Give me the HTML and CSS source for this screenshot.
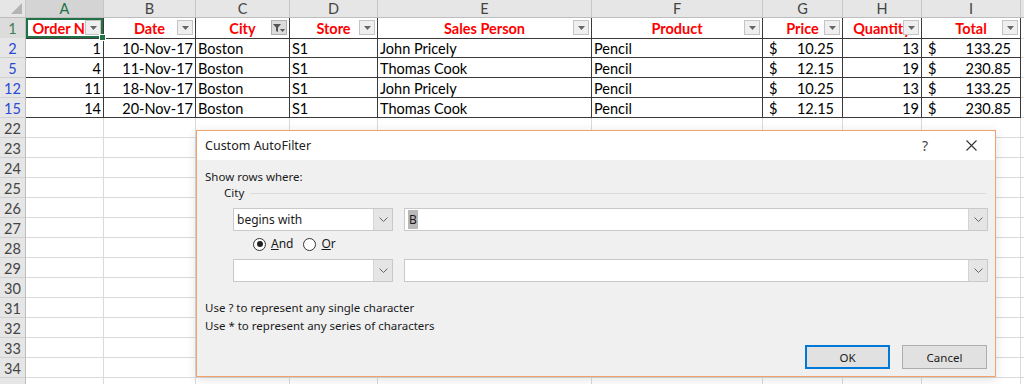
FILE: index.html
```html
<!DOCTYPE html>
<html>
<head>
    <title>Custom AutoFilter</title>
    <link rel="stylesheet" href="styles.css">
</head>
<body>
    <div class="sheet">
        <div class="row colhead">
            <div class="corner"><span class="tri"></span></div>
            <div class="sel">A</div><div>B</div><div>C</div><div>D</div><div>E</div><div>F</div><div>G</div><div>H</div><div>I</div><div></div>
        </div>

        <div class="row thead">
            <div class="rh rsel">1</div>
            <div class="th active">Order No.<span class="fbtn"><svg width="7" height="4"><path d="M0 0h7L3.5 4z" fill="#666"/></svg></span><span class="handle"></span></div>
            <div class="th">Date<span class="fbtn"><svg width="7" height="4"><path d="M0 0h7L3.5 4z" fill="#666"/></svg></span></div>
            <div class="th">City<span class="fbtn on"><svg width="14" height="10"><path d="M1 1h8L6 4.5V9L4 8V4.5z" fill="#555"/><path d="M8 6h5l-2.5 3z" fill="#555"/></svg></span></div>
            <div class="th">Store<span class="fbtn"><svg width="7" height="4"><path d="M0 0h7L3.5 4z" fill="#666"/></svg></span></div>
            <div class="th">Sales Person<span class="fbtn"><svg width="7" height="4"><path d="M0 0h7L3.5 4z" fill="#666"/></svg></span></div>
            <div class="th">Product<span class="fbtn"><svg width="7" height="4"><path d="M0 0h7L3.5 4z" fill="#666"/></svg></span></div>
            <div class="th">Price<span class="fbtn"><svg width="7" height="4"><path d="M0 0h7L3.5 4z" fill="#666"/></svg></span></div>
            <div class="th">Quantity<span class="fbtn"><svg width="7" height="4"><path d="M0 0h7L3.5 4z" fill="#666"/></svg></span></div>
            <div class="th">Total<span class="fbtn"><svg width="7" height="4"><path d="M0 0h7L3.5 4z" fill="#666"/></svg></span></div>
            <div class="pad"></div>
        </div>

        <div class="row data">
            <div class="rh blue">2</div>
            <div class="num">1</div><div class="num">10-Nov-17</div><div>Boston</div><div>S1</div><div>John Pricely</div><div>Pencil</div>
            <div class="acct"><span>$</span><span>10.25</span></div><div class="num">13</div><div class="acct tot"><span>$</span><span>133.25</span></div><div class="pad"></div>
        </div>
        <div class="row data">
            <div class="rh blue">5</div>
            <div class="num">4</div><div class="num">11-Nov-17</div><div>Boston</div><div>S1</div><div>Thomas Cook</div><div>Pencil</div>
            <div class="acct"><span>$</span><span>12.15</span></div><div class="num">19</div><div class="acct tot"><span>$</span><span>230.85</span></div><div class="pad"></div>
        </div>
        <div class="row data">
            <div class="rh blue">12</div>
            <div class="num">11</div><div class="num">18-Nov-17</div><div>Boston</div><div>S1</div><div>John Pricely</div><div>Pencil</div>
            <div class="acct"><span>$</span><span>10.25</span></div><div class="num">13</div><div class="acct tot"><span>$</span><span>133.25</span></div><div class="pad"></div>
        </div>
        <div class="row data">
            <div class="rh blue">15</div>
            <div class="num">14</div><div class="num">20-Nov-17</div><div>Boston</div><div>S1</div><div>Thomas Cook</div><div>Pencil</div>
            <div class="acct"><span>$</span><span>12.15</span></div><div class="num">19</div><div class="acct tot"><span>$</span><span>230.85</span></div><div class="pad"></div>
        </div>

        <div class="row"><div class="rh">22</div><div></div><div></div><div></div><div></div><div></div><div></div><div></div><div></div><div></div><div></div></div>
        <div class="row"><div class="rh">23</div><div></div><div></div><div></div><div></div><div></div><div></div><div></div><div></div><div></div><div></div></div>
        <div class="row"><div class="rh">24</div><div></div><div></div><div></div><div></div><div></div><div></div><div></div><div></div><div></div><div></div></div>
        <div class="row"><div class="rh">25</div><div></div><div></div><div></div><div></div><div></div><div></div><div></div><div></div><div></div><div></div></div>
        <div class="row"><div class="rh">26</div><div></div><div></div><div></div><div></div><div></div><div></div><div></div><div></div><div></div><div></div></div>
        <div class="row"><div class="rh">27</div><div></div><div></div><div></div><div></div><div></div><div></div><div></div><div></div><div></div><div></div></div>
        <div class="row"><div class="rh">28</div><div></div><div></div><div></div><div></div><div></div><div></div><div></div><div></div><div></div><div></div></div>
        <div class="row"><div class="rh">29</div><div></div><div></div><div></div><div></div><div></div><div></div><div></div><div></div><div></div><div></div></div>
        <div class="row"><div class="rh">30</div><div></div><div></div><div></div><div></div><div></div><div></div><div></div><div></div><div></div><div></div></div>
        <div class="row"><div class="rh">31</div><div></div><div></div><div></div><div></div><div></div><div></div><div></div><div></div><div></div><div></div></div>
        <div class="row"><div class="rh">32</div><div></div><div></div><div></div><div></div><div></div><div></div><div></div><div></div><div></div><div></div></div>
        <div class="row"><div class="rh">33</div><div></div><div></div><div></div><div></div><div></div><div></div><div></div><div></div><div></div><div></div></div>
        <div class="row"><div class="rh">34</div><div></div><div></div><div></div><div></div><div></div><div></div><div></div><div></div><div></div><div></div></div>
        <div class="row"><div class="rh"></div><div></div><div></div><div></div><div></div><div></div><div></div><div></div><div></div><div></div><div></div></div>
    </div>

    <div class="dialog">
        <div class="titlebar">
            <span class="title">Custom AutoFilter</span>
            <span class="help">?</span>
            <span class="close"><svg width="11" height="11"><path d="M0.5 0.5l10 10M10.5 0.5l-10 10" stroke="#333" stroke-width="1.1"/></svg></span>
        </div>
        <div class="body">
            <div class="caption">Show rows where:</div>
            <div class="legend"><span>City</span><i></i></div>

            <div class="crit">
                <div class="combo">
                    <span class="val">begins with</span>
                    <span class="drop"><svg width="9" height="5"><path d="M0.5 0.5l4 4 4-4" fill="none" stroke="#666"/></svg></span>
                </div>
                <div class="combo wide">
                    <span class="val"><b class="hl">B</b></span>
                    <span class="drop"><svg width="9" height="5"><path d="M0.5 0.5l4 4 4-4" fill="none" stroke="#666"/></svg></span>
                </div>
            </div>

            <div class="radios">
                <label><span class="radio checked"></span><span><u>A</u>nd</span></label>
                <label><span class="radio"></span><span><u>O</u>r</span></label>
            </div>

            <div class="crit">
                <div class="combo">
                    <span class="val"></span>
                    <span class="drop"><svg width="9" height="5"><path d="M0.5 0.5l4 4 4-4" fill="none" stroke="#666"/></svg></span>
                </div>
                <div class="combo wide">
                    <span class="val"></span>
                    <span class="drop"><svg width="9" height="5"><path d="M0.5 0.5l4 4 4-4" fill="none" stroke="#666"/></svg></span>
                </div>
            </div>

            <div class="hint first">Use ? to represent any single character</div>
            <div class="hint">Use * to represent any series of characters</div>

            <div class="buttons">
                <button class="btn default">OK</button>
                <button class="btn">Cancel</button>
            </div>
        </div>
    </div>
</body>
</html>
```

FILE: styles.css
```css
body {
    margin: 0;
    background: #fff;
    font-family: Lato, "Liberation Sans", sans-serif;
    overflow: hidden;
}
.sheet {
    width: 1024px;
    height: 384px;
    overflow: hidden;
}
.row {
    display: grid;
    grid-template-columns: 26px 78px 92px 94px 88px 214px 171px 80px 79px 99px 1fr;
    height: 20px;
}
.row > div {
    box-sizing: border-box;
    border-right: 1px solid #dadada;
    border-bottom: 1px solid #dadada;
    font-size: 14.5px;
    line-height: 18px;
    padding: 2px 2px 0;
    white-space: nowrap;
    overflow: hidden;
    color: #000;
}

/* column letters */
.colhead {
    height: 18px;
}
.colhead > div {
    background: #e6e6e6;
    border-right-color: #c6c6c6;
    border-bottom-color: #bdbdbd;
    text-align: center;
    line-height: 17px;
    padding-top: 0;
    color: #444;
}
.colhead > div.sel {
    background: #d4d4d4;
    color: #217346;
}
.colhead > .corner {
    position: relative;
}
.corner .tri {
    position: absolute;
    right: 3px;
    bottom: 3px;
    border-style: solid;
    border-width: 0 0 11px 11px;
    border-color: transparent transparent #b4b4b4 transparent;
}

/* row numbers */
.row > .rh {
    background: #e6e6e6;
    border-right-color: #bdbdbd;
    border-bottom-color: #d0d0d0;
    color: #444;
    text-align: center;
    padding: 2px 0 0;
}
.row > .rh.rsel {
    background: #dcdcdc;
    color: #3f7a55;
}
.row > .rh.blue {
    color: #2a49d6;
}

/* table header cells */
.thead > div,
.data > div {
    border-right-color: #3a3a3a;
    border-bottom-color: #3a3a3a;
}
.thead > .rh,
.data > .rh {
    border-right-color: #bdbdbd;
    border-bottom-color: #d0d0d0;
}
.thead > .pad,
.data > .pad {
    border-right-color: #dadada;
    border-bottom-color: #dadada;
}
.th {
    position: relative;
    text-align: center;
    font-weight: bold;
    color: #ff0000 !important;
}
.th.active {
    overflow: visible !important;
    box-shadow: inset 0 0 0 2px #217346;
}
.fbtn {
    position: absolute;
    right: 2px;
    top: 2px;
    width: 16px;
    height: 15px;
    box-sizing: border-box;
    background: #efefef;
    border: 1px solid #c4c4c4;
    display: flex;
    align-items: center;
    justify-content: center;
}
.fbtn.on {
    background: #dcdcdc;
    border-color: #b0b0b0;
}
.handle {
    position: absolute;
    right: -3px;
    bottom: -3px;
    width: 5px;
    height: 5px;
    background: #217346;
    border: 1px solid #fff;
    z-index: 2;
}

/* data cells */
.num {
    text-align: right;
}
.acct {
    display: flex;
    justify-content: space-between;
    padding: 2px 8px 0 6px !important;
}
.acct.tot {
    padding-right: 9px !important;
}

/* dialog */
.dialog {
    position: absolute;
    left: 196px;
    top: 130px;
    width: 800px;
    height: 247px;
    box-sizing: border-box;
    border: 1px solid #f1a36d;
    background: #f0f0f0;
    box-shadow: 0 2px 10px rgba(0, 0, 0, 0.12);
    font-family: "Noto Sans", "Open Sans", sans-serif;
    font-size: 11.5px;
    color: #1a1a1a;
}
.titlebar {
    height: 29px;
    background: #fff;
    display: flex;
    align-items: center;
    padding-left: 8px;
}
.title {
    flex: 1;
    font-size: 12.5px;
    color: #222;
}
.help {
    font-size: 14px;
    color: #444;
    margin-right: 38px;
}
.close {
    display: flex;
    margin-right: 18px;
}
.body {
    padding: 0 7px 0 8px;
}
.caption {
    margin-top: 9px;
    line-height: 16px;
}
.legend {
    display: flex;
    align-items: center;
    line-height: 16px;
    margin-left: 19px;
}
.legend i {
    flex: 1;
    height: 1px;
    background: #dcdcdc;
    margin: 0 2px 0 6px;
}
.crit {
    display: flex;
    gap: 11px;
    margin: 7px 0 0 28px;
}
.combo {
    width: 160px;
    height: 23px;
    box-sizing: border-box;
    background: #fff;
    border: 1px solid #c9c9c9;
    display: flex;
}
.combo.wide {
    flex: 1;
}
.combo .val {
    flex: 1;
    padding-left: 3px;
    line-height: 21px;
    font-size: 12px;
}
.combo .drop {
    width: 18px;
    background: #e5e5e5;
    border-left: 1px solid #d4d4d4;
    display: flex;
    align-items: center;
    justify-content: center;
}
.hl {
    font-weight: normal;
    background: #b9b9b9;
    padding: 1px 1px;
}
.radios {
    display: flex;
    gap: 10px;
    margin: 5px 0 0 48px;
    line-height: 16px;
    font-size: 12px;
}
.radios label {
    display: flex;
    align-items: center;
    gap: 5px;
}
.radio {
    width: 11px;
    height: 11px;
    border: 1px solid #333;
    border-radius: 50%;
    background: #fff;
    display: flex;
    align-items: center;
    justify-content: center;
}
.radio.checked::after {
    content: "";
    width: 6px;
    height: 6px;
    border-radius: 50%;
    background: #222;
}
.hint {
    line-height: 18px;
}
.hint.first {
    margin-top: 17px;
}
.buttons {
    display: flex;
    justify-content: flex-end;
    gap: 12px;
    margin: 10px 1px 0 0;
}
.btn {
    width: 85px;
    height: 24px;
    box-sizing: border-box;
    background: #e1e1e1;
    border: 1px solid #adadad;
    font-family: "Noto Sans", "Open Sans", sans-serif;
    font-size: 11.5px;
    color: #1a1a1a;
    padding: 0;
}
.btn.default {
    border: 2px solid #0078d7;
}
```
